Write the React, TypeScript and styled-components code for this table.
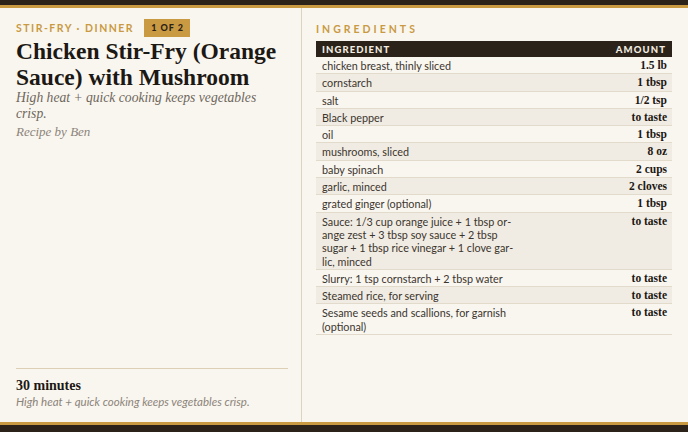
import React, { FC } from 'react';
import styled, { createGlobalStyle } from 'styled-components';

const GlobalStyle = createGlobalStyle`
    html, body {
        margin: 0;
        padding: 0;
        background: #f9f6f0;
    }
    * { box-sizing: border-box; }
`;

const Page = styled.div`
    width: 688px;
    height: 432px;
    display: flex;
    flex-direction: column;
    background: #f9f6f0;
    overflow: hidden;
`;

const TopBar = styled.div`
    height: 8px;
    background: #2b2219;
    border-bottom: 3px solid #c99a42;
`;

const BottomBar = styled.div`
    height: 10px;
    background: #2b2219;
    border-top: 3px solid #c99a42;
`;

const Main = styled.div`
    flex: 1;
    display: grid;
    grid-template-columns: 301px 1px 1fr;
    min-height: 0;
`;

const Divider = styled.div`
    background: #dcd3c3;
`;

const LeftPanel = styled.section`
    display: flex;
    flex-direction: column;
    padding: 11px 13px 0 16px;
`;

const EyebrowRow = styled.div`
    display: flex;
    align-items: center;
    gap: 10px;
    height: 18px;
`;

const Eyebrow = styled.span`
    font-family: 'Lato', 'Liberation Sans', sans-serif;
    font-weight: 700;
    font-size: 10.5px;
    letter-spacing: 1.5px;
    color: #c99a42;
`;

const Badge = styled.span`
    background: #c99a42;
    color: #2b2219;
    font-family: 'Lato', 'Liberation Sans', sans-serif;
    font-weight: 900;
    font-size: 9px;
    letter-spacing: 1px;
    height: 18px;
    line-height: 18px;
    padding: 0 6px 0 7px;
`;

const Title = styled.h1`
    margin: 1px 0 0;
    font-family: 'Liberation Serif', 'DejaVu Serif', serif;
    font-weight: 700;
    font-size: 23.5px;
    line-height: 26px;
    color: #1c1814;
`;

const Subtitle = styled.p`
    margin: 0;
    font-family: 'Liberation Serif', serif;
    font-style: italic;
    font-size: 13.6px;
    line-height: 16px;
    color: #6e665b;
`;

const Byline = styled.p`
    margin: 2px 0 0;
    font-family: 'Liberation Serif', serif;
    font-style: italic;
    font-size: 13px;
    line-height: 16px;
    color: #8c8479;
`;

const Footer = styled.div`
    margin-top: auto;
    border-top: 1px solid #dccfb6;
    padding: 8px 0 13px;
`;

const Duration = styled.div`
    font-family: 'Liberation Serif', serif;
    font-weight: 700;
    font-size: 14px;
    line-height: 18px;
    color: #1c1814;
`;

const FooterNote = styled.div`
    font-family: 'Lato', 'Liberation Sans', sans-serif;
    font-style: italic;
    font-size: 11.5px;
    line-height: 14px;
    color: #8c8479;
`;

const RightPanel = styled.section`
    padding: 15px 16px 0 14px;
`;

const SectionLabel = styled.h2`
    margin: 0 0 5px;
    font-family: 'Lato', 'Liberation Sans', sans-serif;
    font-weight: 700;
    font-size: 10.5px;
    line-height: 13px;
    letter-spacing: 3px;
    color: #c99a42;
`;

const Table = styled.table`
    width: 100%;
    border-collapse: collapse;
    table-layout: fixed;
`;

const HeadCell = styled.th<{ $align?: 'left' | 'right'; $width?: number }>`
    background: #2b2219;
    color: #f3ede2;
    font-family: 'Lato', 'Liberation Sans', sans-serif;
    font-weight: 900;
    font-size: 9.5px;
    letter-spacing: 1.1px;
    height: 16px;
    padding: 0 6px;
    text-align: ${p => p.$align ?? 'left'};
    width: ${p => (p.$width ? `${p.$width}px` : 'auto')};
`;

const Row = styled.tr<{ $alt: boolean }>`
    background: ${p => (p.$alt ? '#f1ece3' : '#f9f6f0')};
    border-bottom: 1px solid #e2dacb;
`;

const NameCell = styled.td`
    padding: 2px 6px 1px;
    font-family: 'Lato', 'Liberation Sans', sans-serif;
    font-size: 10.8px;
    line-height: 13.3px;
    color: #3b352e;
    vertical-align: top;
`;

const AmountCell = styled.td`
    padding: 2px 5px 1px 6px;
    font-family: 'Liberation Serif', serif;
    font-weight: 700;
    font-size: 11.5px;
    line-height: 13.3px;
    color: #1c1814;
    text-align: right;
    vertical-align: top;
`;

const ingredients: [string, string][] = [
    ['chicken breast, thinly sliced', '1.5 lb'],
    ['cornstarch', '1 tbsp'],
    ['salt', '1/2 tsp'],
    ['Black pepper', 'to taste'],
    ['oil', '1 tbsp'],
    ['mushrooms, sliced', '8 oz'],
    ['baby spinach', '2 cups'],
    ['garlic, minced', '2 cloves'],
    ['grated ginger (optional)', '1 tbsp'],
    ['Sauce: 1/3 cup orange juice + 1 tbsp or\u00ADange zest + 3 tbsp soy sauce + 2 tbsp sugar + 1 tbsp rice vinegar + 1 clove gar\u00ADlic, minced', 'to taste'],
    ['Slurry: 1 tsp cornstarch + 2 tbsp water', 'to taste'],
    ['Steamed rice, for serving', 'to taste'],
    ['Sesame seeds and scallions, for garnish (optional)', 'to taste'],
];

const App: FC = () => (
    <Page>
        <GlobalStyle />
        <TopBar />
        <Main>
            <LeftPanel>
                <EyebrowRow>
                    <Eyebrow>STIR-FRY · DINNER</Eyebrow>
                    <Badge>1 OF 2</Badge>
                </EyebrowRow>
                <Title>Chicken Stir-Fry (Orange Sauce) with Mushroom</Title>
                <Subtitle>High heat + quick cooking keeps vegetables crisp.</Subtitle>
                <Byline>Recipe by Ben</Byline>
                <Footer>
                    <Duration>30 minutes</Duration>
                    <FooterNote>High heat + quick cooking keeps vegetables crisp.</FooterNote>
                </Footer>
            </LeftPanel>
            <Divider />
            <RightPanel>
                <SectionLabel>INGREDIENTS</SectionLabel>
                <Table>
                    <thead>
                        <tr>
                            <HeadCell $width={210}>INGREDIENT</HeadCell>
                            <HeadCell $align="right">AMOUNT</HeadCell>
                        </tr>
                    </thead>
                    <tbody>
                        {ingredients.map(([name, amount], i) => (
                            <Row key={name} $alt={i % 2 === 1}>
                                <NameCell>{name}</NameCell>
                                <AmountCell>{amount}</AmountCell>
                            </Row>
                        ))}
                    </tbody>
                </Table>
            </RightPanel>
        </Main>
        <BottomBar />
    </Page>
);

export default App;
